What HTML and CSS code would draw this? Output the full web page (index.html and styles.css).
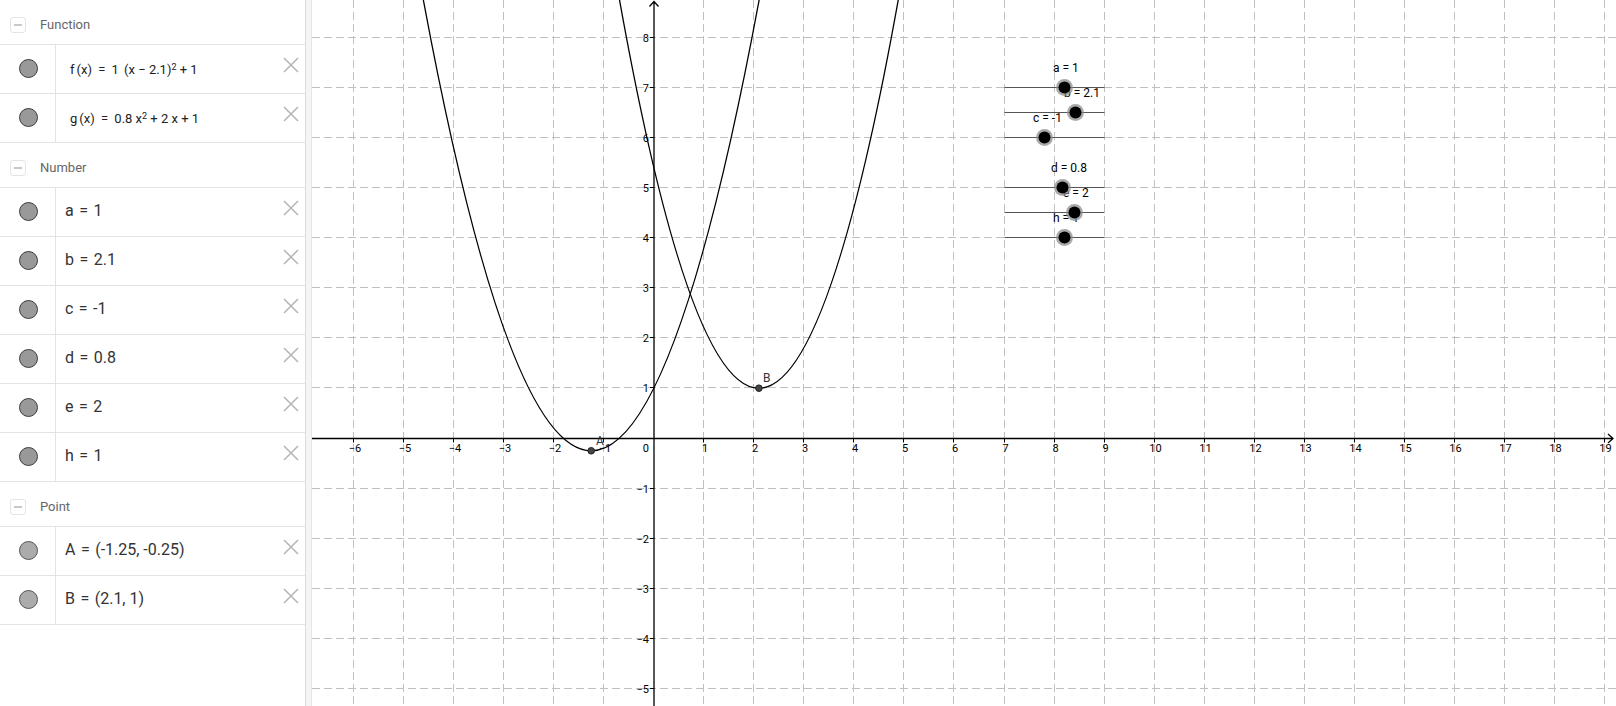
FILE: index.html
```html
<!DOCTYPE html>
<html>
<head>
<meta charset="utf-8">
<link rel="stylesheet" href="styles.css">
</head>
<body>
<div class="app">
  <aside class="av">
    <div class="hdr"><span class="minus"></span><span class="hdr-t">Function</span></div>
    <div class="row"><div class="mark"><span class="dot"></span></div><div class="val fn">f<span class="sp"></span>(x) <span class="eq">=</span> 1 <span class="sp"></span>(x − 2.1)<sup>2</sup> + 1</div><span class="del"><svg viewBox="0 0 16 16"><path d="M1 1L15 15M15 1L1 15"/></svg></span></div>
    <div class="row"><div class="mark"><span class="dot"></span></div><div class="val fn">g<span class="sp"></span>(x) <span class="eq">=</span> 0.8 x<sup>2</sup> + 2 x + 1</div><span class="del"><svg viewBox="0 0 16 16"><path d="M1 1L15 15M15 1L1 15"/></svg></span></div>
    <div class="hdr"><span class="minus"></span><span class="hdr-t">Number</span></div>
    <div class="row"><div class="mark"><span class="dot"></span></div><div class="val">a <span class="eq">=</span> 1</div><span class="del"><svg viewBox="0 0 16 16"><path d="M1 1L15 15M15 1L1 15"/></svg></span></div>
    <div class="row"><div class="mark"><span class="dot"></span></div><div class="val">b <span class="eq">=</span> 2.1</div><span class="del"><svg viewBox="0 0 16 16"><path d="M1 1L15 15M15 1L1 15"/></svg></span></div>
    <div class="row"><div class="mark"><span class="dot"></span></div><div class="val">c <span class="eq">=</span> -1</div><span class="del"><svg viewBox="0 0 16 16"><path d="M1 1L15 15M15 1L1 15"/></svg></span></div>
    <div class="row"><div class="mark"><span class="dot"></span></div><div class="val">d <span class="eq">=</span> 0.8</div><span class="del"><svg viewBox="0 0 16 16"><path d="M1 1L15 15M15 1L1 15"/></svg></span></div>
    <div class="row"><div class="mark"><span class="dot"></span></div><div class="val">e <span class="eq">=</span> 2</div><span class="del"><svg viewBox="0 0 16 16"><path d="M1 1L15 15M15 1L1 15"/></svg></span></div>
    <div class="row"><div class="mark"><span class="dot"></span></div><div class="val">h <span class="eq">=</span> 1</div><span class="del"><svg viewBox="0 0 16 16"><path d="M1 1L15 15M15 1L1 15"/></svg></span></div>
    <div class="hdr"><span class="minus"></span><span class="hdr-t">Point</span></div>
    <div class="row"><div class="mark"><span class="dot pt"></span></div><div class="val">A <span class="eq">=</span> (-1.25, -0.25)</div><span class="del"><svg viewBox="0 0 16 16"><path d="M1 1L15 15M15 1L1 15"/></svg></span></div>
    <div class="row"><div class="mark"><span class="dot pt"></span></div><div class="val">B <span class="eq">=</span> (2.1, 1)</div><span class="del"><svg viewBox="0 0 16 16"><path d="M1 1L15 15M15 1L1 15"/></svg></span></div>
  </aside>
  <div class="splitter"></div>
  <main class="ev">
    <svg class="plot" width="1304" height="706" viewBox="312 0 1304 706">
      <g class="grid">
        <path d="M353.5 0V706M403.5 0V706M453.5 0V706M503.5 0V706M553.5 0V706M603.5 0V706M703.5 0V706M753.5 0V706M803.5 0V706M853.5 0V706M903.5 0V706M953.5 0V706M1004.5 0V706M1054.5 0V706M1104.5 0V706M1154.5 0V706M1204.5 0V706M1254.5 0V706M1304.5 0V706M1354.5 0V706M1404.5 0V706M1454.5 0V706M1504.5 0V706M1554.5 0V706M1604.5 0V706"/>
        <path d="M312 37.5H1616M312 87.5H1616M312 137.5H1616M312 187.5H1616M312 237.5H1616M312 287.5H1616M312 337.5H1616M312 387.5H1616M312 488.5H1616M312 538.5H1616M312 588.5H1616M312 638.5H1616M312 688.5H1616"/>
      </g>
      <g class="axes">
        <path d="M312 438.5H1613M1608 434L1613 438.5L1608 443"/>
        <path d="M654 706V1.5M649.5 6.5L654 1.5L658.5 6.5"/>
        <path class="ticks" d="M353.5 438.5v4M403.5 438.5v4M453.5 438.5v4M503.5 438.5v4M553.5 438.5v4M603.5 438.5v4M703.5 438.5v4M753.5 438.5v4M803.5 438.5v4M853.5 438.5v4M903.5 438.5v4M953.5 438.5v4M1004.5 438.5v4M1054.5 438.5v4M1104.5 438.5v4M1154.5 438.5v4M1204.5 438.5v4M1254.5 438.5v4M1304.5 438.5v4M1354.5 438.5v4M1404.5 438.5v4M1454.5 438.5v4M1504.5 438.5v4M1554.5 438.5v4M1604.5 438.5v4M654 37.5h-4M654 87.5h-4M654 137.5h-4M654 187.5h-4M654 237.5h-4M654 287.5h-4M654 337.5h-4M654 387.5h-4M654 488.5h-4M654 538.5h-4M654 588.5h-4M654 638.5h-4M654 688.5h-4"/>
      </g>
      <g class="xl">
        <text x="355" y="452">−6</text><text x="405" y="452">−5</text><text x="455" y="452">−4</text><text x="505" y="452">−3</text><text x="555" y="452">−2</text><text x="605" y="452">−1</text>
        <text x="705" y="452">1</text><text x="755" y="452">2</text><text x="805" y="452">3</text><text x="855" y="452">4</text><text x="905" y="452">5</text><text x="955" y="452">6</text><text x="1005.5" y="452">7</text><text x="1055.5" y="452">8</text><text x="1105.5" y="452">9</text><text x="1155.5" y="452">10</text><text x="1205.5" y="452">11</text><text x="1255.5" y="452">12</text><text x="1305.5" y="452">13</text><text x="1355.5" y="452">14</text><text x="1405.5" y="452">15</text><text x="1455.5" y="452">16</text><text x="1505.5" y="452">17</text><text x="1555.5" y="452">18</text><text x="1605.5" y="452">19</text>
      </g>
      <g class="yl">
        <text x="649" y="41.5">8</text><text x="649" y="91.5">7</text><text x="649" y="141.5">6</text><text x="649" y="191.5">5</text><text x="649" y="241.5">4</text><text x="649" y="291.5">3</text><text x="649" y="341.5">2</text><text x="649" y="391.5">1</text>
        <text x="649" y="452">0</text>
        <text x="649" y="492.5">−1</text><text x="649" y="542.5">−2</text><text x="649" y="592.5">−3</text><text x="649" y="642.5">−4</text><text x="649" y="692.5">−5</text>
      </g>
      <g class="curves" transform="translate(653.8 438.3) scale(50.04 -50.06)">
        <path d="M-0.9 10Q2.1 -8 5.1 10"/>
        <path d="M-4.85 10.118Q-1.25 -10.618 2.35 10.118"/>
      </g>
      <g class="pts">
        <circle cx="591.2" cy="450.8" r="3.3"/>
        <circle cx="758.9" cy="388.2" r="3.3"/>
      </g>
      <g class="ptl">
        <text x="596" y="444.5">A</text>
        <text x="763" y="381.5">B</text>
      </g>
      <g class="sl-lab">
        <text x="1053" y="72">a = 1</text>
        <text x="1064" y="97">b = 2.1</text>
        <text x="1033" y="122">c = -1</text>
        <text x="1051" y="172">d = 0.8</text>
        <text x="1063" y="197">e = 2</text>
        <text x="1053" y="222">h = 1</text>
      </g>
      <g class="sl-line">
        <path d="M1004.5 87.5H1104.5M1004.5 112.5H1104.5M1004.5 137.5H1104.5M1004.5 187.5H1104.5M1004.5 212.5H1104.5M1004.5 237.5H1104.5"/>
      </g>
      <g class="knob">
        <circle class="halo" cx="1064.5" cy="87.5" r="8.5"/><circle cx="1064.5" cy="87.5" r="6"/>
        <circle class="halo" cx="1075.5" cy="112.5" r="8.5"/><circle cx="1075.5" cy="112.5" r="6"/>
        <circle class="halo" cx="1044.5" cy="137.5" r="8.5"/><circle cx="1044.5" cy="137.5" r="6"/>
        <circle class="halo" cx="1062.5" cy="187.5" r="8.5"/><circle cx="1062.5" cy="187.5" r="6"/>
        <circle class="halo" cx="1074.5" cy="212.5" r="8.5"/><circle cx="1074.5" cy="212.5" r="6"/>
        <circle class="halo" cx="1064.5" cy="237.5" r="8.5"/><circle cx="1064.5" cy="237.5" r="6"/>
      </g>
    </svg>
  </main>
</div>
</body>
</html>
```
FILE: styles.css
```css
html, body {
  margin: 0;
  padding: 0;
  width: 1616px;
  height: 706px;
  overflow: hidden;
  background: #fff;
  font-family: Roboto, "Liberation Sans", sans-serif;
}
.app {
  display: flex;
  width: 1616px;
  height: 706px;
}
.av {
  width: 305px;
  flex: 0 0 305px;
  border-right: 1px solid #dcdcdc;
  background: #fff;
}
.splitter {
  flex: 0 0 5px;
  background: #f5f5f5;
  border-right: 1px solid #e6e6e6;
}
.ev {
  flex: 1 1 auto;
  position: relative;
  overflow: hidden;
}
.plot {
  display: block;
}
.hdr {
  height: 45px;
  box-sizing: border-box;
  padding-top: 5px;
  border-bottom: 1px solid #e3e3e3;
  display: flex;
  align-items: center;
  padding-left: 10px;
}
.minus {
  width: 16px;
  height: 16px;
  box-sizing: border-box;
  border: 1px solid #e4e4e4;
  border-radius: 3px;
  position: relative;
  display: inline-block;
}
.minus::after {
  content: "";
  position: absolute;
  left: 3px;
  right: 3px;
  top: 6.5px;
  height: 1.5px;
  background: #c8c8c8;
}
.hdr-t {
  margin-left: 14px;
  font-size: 13px;
  color: #666;
}
.row {
  height: 49px;
  box-sizing: border-box;
  border-bottom: 1px solid #e3e3e3;
  display: flex;
  align-items: stretch;
  position: relative;
}
.mark {
  flex: 0 0 55px;
  border-right: 1px solid #e3e3e3;
  display: flex;
  align-items: center;
  justify-content: center;
}
.dot {
  width: 19px;
  height: 19px;
  box-sizing: border-box;
  border-radius: 50%;
  background: #999;
  border: 1px solid #3c3c3c;
  margin-left: 1px;
  margin-top: -2px;
}
.dot.pt {
  background: #ababab;
  border-color: #555;
}
.val {
  display: flex;
  align-items: center;
  padding-left: 9px;
  padding-bottom: 3px;
  font-size: 16px;
  color: #333;
  white-space: pre;
}
.val .eq {
  margin: 0 1.5px;
}
.val.fn {
  font-size: 13px;
  padding-left: 14px;
  padding-bottom: 0;
  color: #222;
}
.val.fn .eq {
  margin: 0 3px;
}
.val.fn sup {
  font-size: 9px;
  position: relative;
  top: -2px;
}
.sp {
  display: inline-block;
  width: 2px;
}
.del {
  position: absolute;
  right: 6px;
  top: 12px;
  width: 16px;
  height: 16px;
}
.del svg {
  display: block;
  width: 16px;
  height: 16px;
}
.del path {
  stroke: #b5b5b5;
  stroke-width: 1.5;
  fill: none;
}
.grid path {
  stroke: #c0c0c0;
  stroke-width: 1;
  stroke-dasharray: 8 4;
  fill: none;
}
.axes path {
  stroke: #000;
  stroke-width: 1.3;
  fill: none;
}
.axes .ticks {
  stroke-width: 1;
}
.xl text, .yl text {
  font-family: Roboto, "Liberation Sans", sans-serif;
  font-size: 11px;
  fill: #000;
}
.xl text { text-anchor: middle; }
.yl text { text-anchor: end; }
.curves path {
  fill: none;
  stroke: #000;
  stroke-width: 1.3;
  vector-effect: non-scaling-stroke;
}
.pts circle {
  fill: #444;
  stroke: #222;
  stroke-width: 1;
}
.ptl text {
  font-size: 12px;
  fill: #333;
}
.sl-lab text {
  font-size: 12px;
  fill: #000;
}
.sl-line path {
  stroke: #555;
  stroke-width: 1;
  fill: none;
}
.knob circle {
  fill: #000;
}
.knob .halo {
  fill: #8c8c8c;
  opacity: 0.75;
}
```
